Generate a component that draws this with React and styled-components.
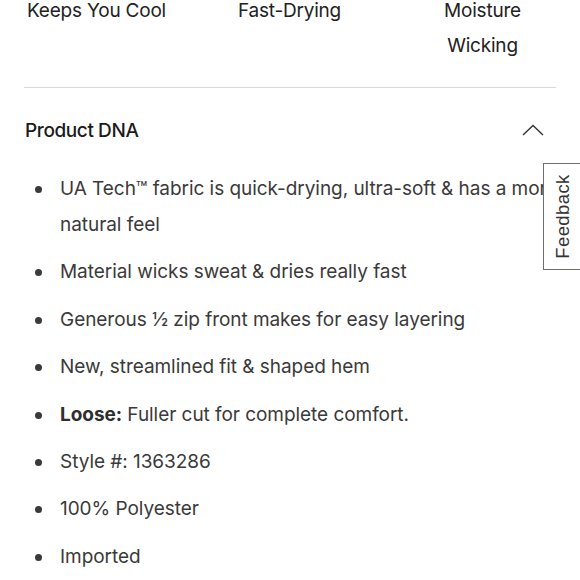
import React from "react"
import styled, { createGlobalStyle } from "styled-components"

const GlobalStyle = createGlobalStyle`
  html, body {
    margin: 0;
    padding: 0;
    background: #fff;
    overflow: hidden;
  }
  body {
    font-family: Inter, "Noto Sans", Arial, sans-serif;
    -webkit-font-smoothing: antialiased;
  }
`

const features = ["Keeps You Cool", "Fast-Drying", "Moisture Wicking"]

const bullets = [
  { text: "UA Tech\u2122 fabric is quick-drying, ultra-soft & has a more natural feel" },
  { text: "Material wicks sweat & dries really fast" },
  { text: "Generous \u00bd zip front makes for easy layering" },
  { text: "New, streamlined fit & shaped hem" },
  { label: "Loose:", text: " Fuller cut for complete comfort." },
  { text: "Style #: 1363286" },
  { text: "100% Polyester" },
  { text: "Imported" },
]

function App() {
  return (
    <Page>
      <GlobalStyle />
      <FeatureRow>
        {features.map((f) => (
          <Feature key={f}>
            <FeatureLabel>{f}</FeatureLabel>
          </Feature>
        ))}
      </FeatureRow>
      <Section>
        <Divider />
        <Header>
          <Title>Product DNA</Title>
          <Chevron viewBox="0 0 22 12">
            <polyline points="1,11 11,1.5 21,11" />
          </Chevron>
        </Header>
        <List>
          {bullets.map((b, i) => (
            <Item key={i}>
              {b.label && <Strong>{b.label}</Strong>}
              {b.text}
            </Item>
          ))}
        </List>
      </Section>
      <FeedbackTab>Feedback</FeedbackTab>
    </Page>
  )
}

const Page = styled.div`
  position: relative;
  width: 580px;
  height: 580px;
  overflow: hidden;
`

const FeatureRow = styled.div`
  display: grid;
  grid-template-columns: repeat(3, 193px);
  margin-top: -7px;
`

const Feature = styled.div`
  display: flex;
  justify-content: center;
`

const FeatureLabel = styled.div`
  max-width: 145px;
  text-align: center;
  font-size: 19px;
  line-height: 35px;
  color: #222;
  letter-spacing: -0.2px;
`

const Section = styled.div`
  padding: 0 24px;
`

const Divider = styled.div`
  height: 1px;
  background: #d9d9d9;
  margin-top: 24px;
`

const Header = styled.div`
  display: flex;
  align-items: center;
  justify-content: space-between;
  padding-top: 29px;
  height: 28px;
  box-sizing: content-box;
`

const Title = styled.div`
  font-size: 19px;
  font-weight: 500;
  line-height: 28px;
  color: #1b1b1b;
  letter-spacing: -0.4px;
  padding-left: 1px;
`

const Chevron = styled.svg`
  width: 22px;
  height: 12px;
  margin-right: 12px;
  margin-top: -3px;
  fill: none;
  stroke: #333;
  stroke-width: 1.4;
`

const List = styled.ul`
  list-style: none;
  margin: 26px -12px 0 0;
  padding: 0;
  display: flex;
  flex-direction: column;
  gap: 11.4px;
`

const Item = styled.li`
  position: relative;
  padding-left: 36px;
  font-size: 19px;
  line-height: 36px;
  color: #3a3a3a;
  letter-spacing: -0.05px;
  &::before {
    content: "";
    position: absolute;
    left: 11px;
    top: 15px;
    width: 7px;
    height: 7px;
    border-radius: 50%;
    background: #3a3a3a;
  }
`

const Strong = styled.strong`
  font-weight: 700;
  color: #2e2e2e;
`

const FeedbackTab = styled.div`
  position: absolute;
  left: 543px;
  top: 163px;
  width: 107px;
  height: 40px;
  box-sizing: border-box;
  border: 1px solid #6f6f6f;
  background: #fff;
  transform-origin: top left;
  transform: translateY(107px) rotate(-90deg);
  display: flex;
  align-items: center;
  justify-content: center;
  font-family: "Liberation Sans", Arial, sans-serif;
  font-size: 18.5px;
  color: #333;
  letter-spacing: 0.4px;
`

export default App
